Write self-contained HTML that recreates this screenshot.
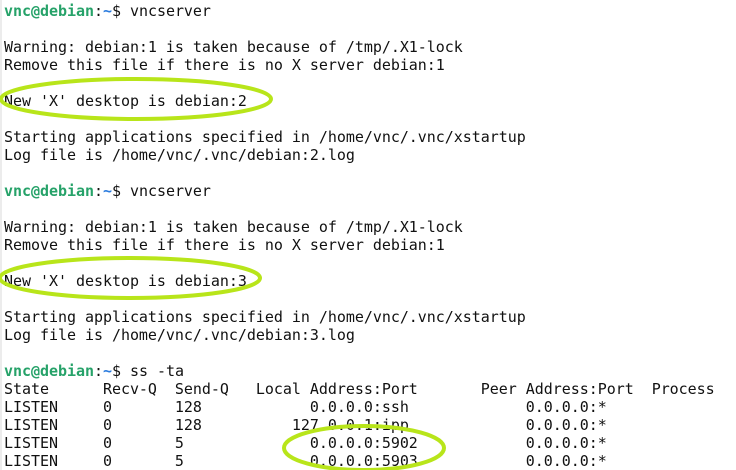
<!DOCTYPE html>
<html><head><style>
body{margin:0;width:736px;height:470px;background:#fff;overflow:hidden;position:relative}
.strip{position:absolute;left:0;top:0;width:2px;height:470px;background:#ececec}
pre{position:absolute;left:4px;top:2px;margin:0;font-family:"DejaVu Sans Mono","Liberation Mono",monospace;font-size:15px;letter-spacing:-0.035px;line-height:18px;color:#111}
.g{color:#26a269;font-weight:bold}.b{color:#2a7bde;font-weight:bold}
svg{position:absolute;left:0;top:0}
</style></head><body>
<div class="strip"></div>
<pre><span class="g">vnc@debian</span>:<span class="b">~</span>$ vncserver

Warning: debian:1 is taken because of /tmp/.X1-lock
Remove this file if there is no X server debian:1

New 'X' desktop is debian:2

Starting applications specified in /home/vnc/.vnc/xstartup
Log file is /home/vnc/.vnc/debian:2.log

<span class="g">vnc@debian</span>:<span class="b">~</span>$ vncserver

Warning: debian:1 is taken because of /tmp/.X1-lock
Remove this file if there is no X server debian:1

New 'X' desktop is debian:3

Starting applications specified in /home/vnc/.vnc/xstartup
Log file is /home/vnc/.vnc/debian:3.log

<span class="g">vnc@debian</span>:<span class="b">~</span>$ ss -ta
State      Recv-Q  Send-Q   Local Address:Port       Peer Address:Port  Process
LISTEN     0       128            0.0.0.0:ssh             0.0.0.0:*
LISTEN     0       128          127.0.0.1:ipp             0.0.0.0:*
LISTEN     0       5              0.0.0.0:5902            0.0.0.0:*
LISTEN     0       5              0.0.0.0:5903            0.0.0.0:*</pre>
<svg width="736" height="470">
<g fill="none" stroke="#b8e51a" stroke-width="4">
<ellipse cx="136" cy="99" rx="135" ry="20"/>
<ellipse cx="130" cy="278" rx="130" ry="20"/>
<ellipse cx="364" cy="448" rx="80" ry="22"/>
</g></svg>
</body></html>
